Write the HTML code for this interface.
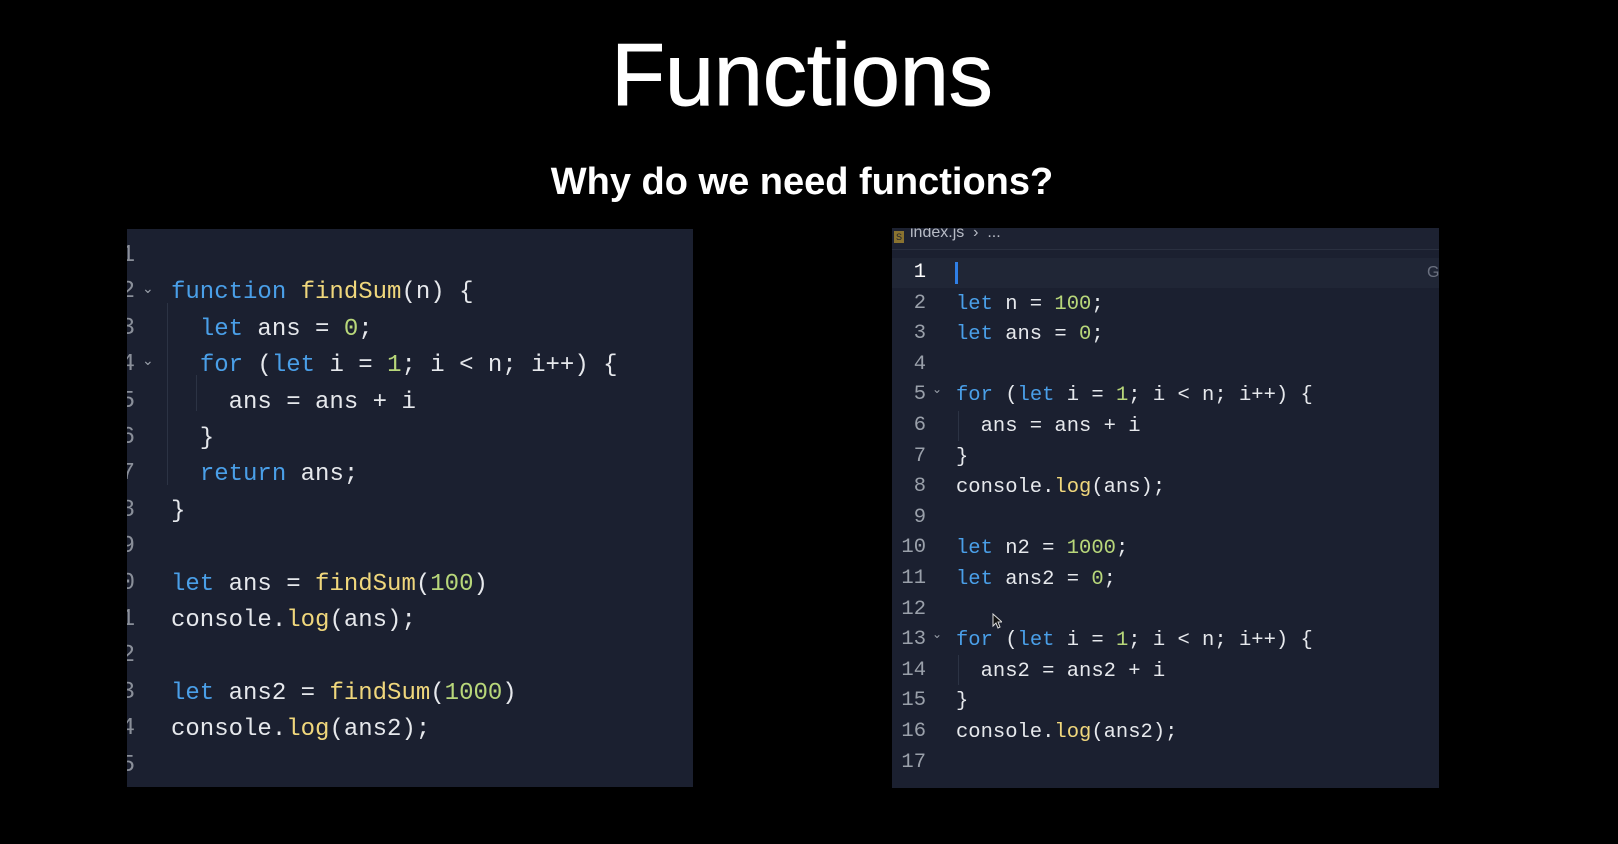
<!DOCTYPE html>
<html><head><meta charset="utf-8"><style>
*{margin:0;padding:0;box-sizing:border-box}
body{width:1618px;height:844px;background:#000;position:relative;overflow:hidden;font-family:"Liberation Sans",sans-serif}
.t1{position:absolute;left:0;width:1604px;text-align:center;top:25px;font-size:88px;color:#fff;line-height:100px;-webkit-text-stroke:1px #fff}
.t2{position:absolute;left:0;width:1604px;text-align:center;top:160px;font-size:38px;font-weight:bold;color:#fff;line-height:44px}
.p{position:absolute;background:#1b2030;overflow:hidden}
.code{position:absolute;font-family:"Liberation Mono",monospace;color:#e6e8ec;white-space:pre}
.k{color:#4a9fe8}.f{color:#f0d77c}.n{color:#b8d77a}
.ln{position:absolute;color:#8a8f99;font-family:"Liberation Mono",monospace;text-align:right}
.ch{position:absolute;color:#9aa0aa;font-size:14px;font-family:"DejaVu Sans",sans-serif}
.g{position:absolute;width:1px;background:#2c3344}
</style></head><body>
<div class="t1">Functions</div>
<div class="t2">Why do we need functions?</div>

<div class="p" style="left:127px;top:229px;width:566px;height:558px">
 <div class="ln" style="left:-20px;top:9px;width:28px;font-size:24px;line-height:36.4px;white-space:pre">1
2
3
4
5
6
7
8
9
0
1
2
3
4
5</div>
 <div class="ch" style="left:15px;top:52px">⌄</div>
 <div class="ch" style="left:15px;top:124px">⌄</div>
 <div class="g" style="left:40px;top:74px;height:182px"></div>
 <div class="g" style="left:69px;top:146px;height:36px"></div>
 <div class="code" style="left:44px;top:10px;font-size:24px;line-height:36.4px">
<span class="k">function</span> <span class="f">findSum</span>(n) {
  <span class="k">let</span> ans = <span class="n">0</span>;
  <span class="k">for</span> (<span class="k">let</span> i = <span class="n">1</span>; i &lt; n; i++) {
    ans = ans + i
  }
  <span class="k">return</span> ans;
}

<span class="k">let</span> ans = <span class="f">findSum</span>(<span class="n">100</span>)
console.<span class="f">log</span>(ans);

<span class="k">let</span> ans2 = <span class="f">findSum</span>(<span class="n">1000</span>)
console.<span class="f">log</span>(ans2);
</div>
</div>

<div class="p" style="left:892px;top:228px;width:547px;height:560px">
 <div style="position:absolute;left:0;top:0;width:547px;height:22px;background:#1d2232;border-bottom:1px solid #2a3040"></div>
 <div style="position:absolute;left:2px;top:3px;width:10px;height:12px;background:#8a7330;color:#1b2030;font-size:9px;line-height:12px;text-align:center">S</div>
 <div style="position:absolute;left:18px;top:-6px;font-size:16px;color:#b8bcc6;line-height:22px">index.js &nbsp;›&nbsp; ...</div>
 <div style="position:absolute;left:0;top:30px;width:547px;height:30px;background:#202636"></div>
 <div style="position:absolute;left:63px;top:34px;width:3px;height:22px;background:#2f7fe6"></div>
 <div style="position:absolute;left:535px;top:36px;color:#6b7180;font-size:16px">G</div>
 <div class="ln" style="left:0;top:30px;width:34px;font-size:20.5px;line-height:30.6px;white-space:pre;color:#9aa0aa"><span style="color:#fff">1</span>
2
3
4
5
6
7
8
9
10
11
12
13
14
15
16
17</div>
 <div class="ch" style="left:40px;top:154px;font-size:12px">⌄</div>
 <div class="ch" style="left:40px;top:399px;font-size:12px">⌄</div>
 <div class="g" style="left:66px;top:183px;height:30px"></div>
 <div class="g" style="left:66px;top:427px;height:30px"></div>
 <div class="code" style="left:64px;top:31px;font-size:20.5px;line-height:30.6px">
<span class="k">let</span> n = <span class="n">100</span>;
<span class="k">let</span> ans = <span class="n">0</span>;

<span class="k">for</span> (<span class="k">let</span> i = <span class="n">1</span>; i &lt; n; i++) {
  ans = ans + i
}
console.<span class="f">log</span>(ans);

<span class="k">let</span> n2 = <span class="n">1000</span>;
<span class="k">let</span> ans2 = <span class="n">0</span>;

<span class="k">for</span> (<span class="k">let</span> i = <span class="n">1</span>; i &lt; n; i++) {
  ans2 = ans2 + i
}
console.<span class="f">log</span>(ans2);
</div>
 <svg style="position:absolute;left:100px;top:385px" width="10" height="16" viewBox="0 0 10 16"><path d="M1 1 L1 13 L4 10 L6 15 L8 14 L6 9 L10 9 Z" fill="#111" stroke="#ddd" stroke-width="1"/></svg>
</div>
</body></html>
